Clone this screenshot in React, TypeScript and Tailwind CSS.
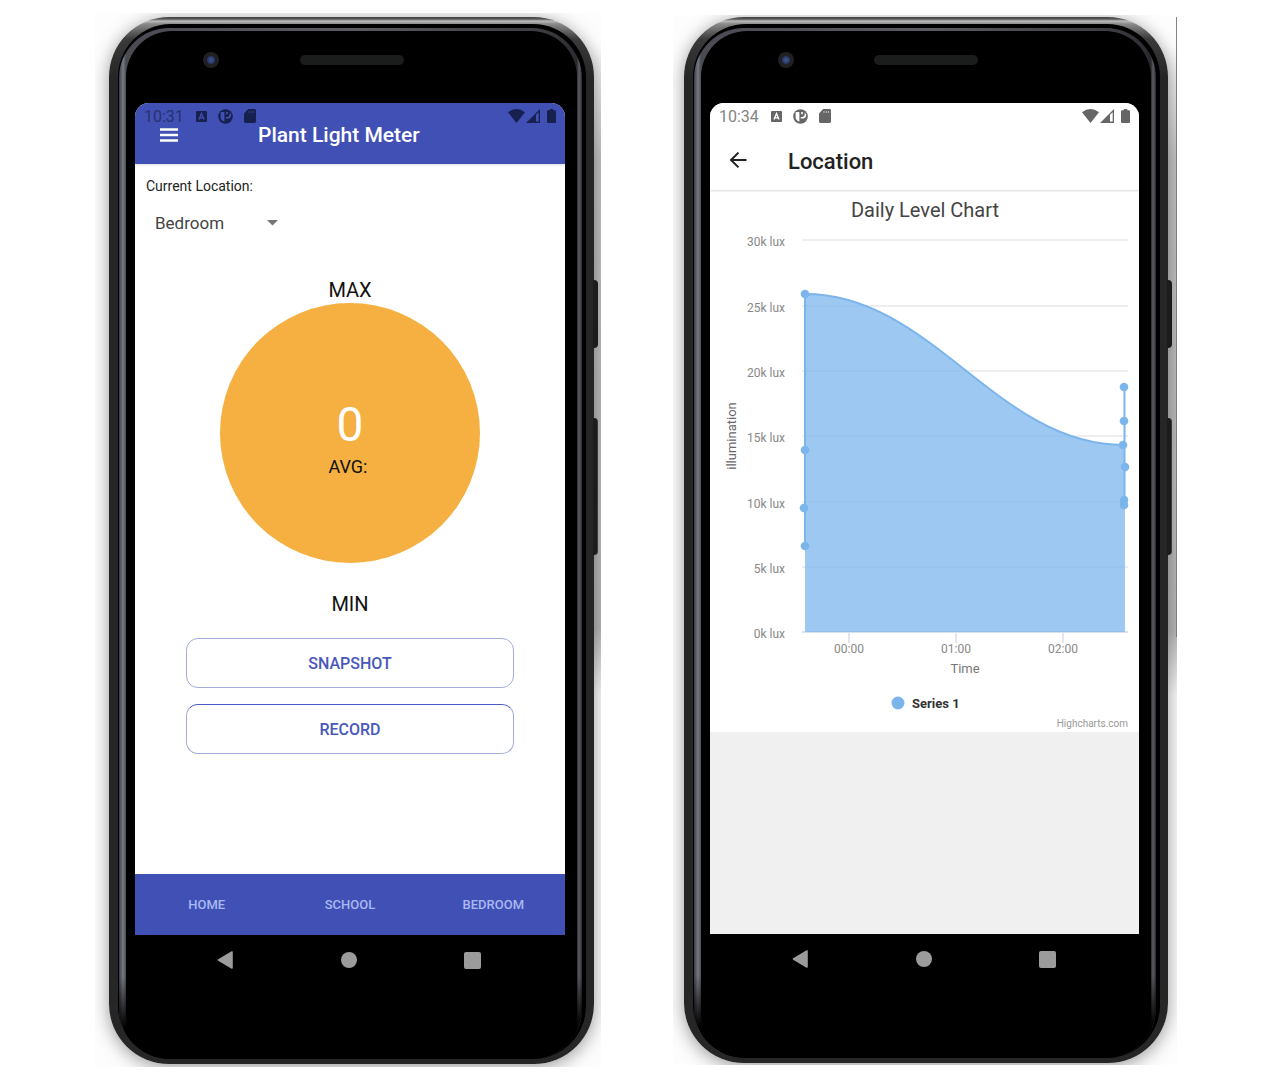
import React from "react";

function StatusBar({ time, tone, textTone, badge }: { time: string; tone: string; textTone: string; badge: string }) {
  return (
    <div className="flex h-[26px] items-center justify-between pl-[9px] pr-[9px]">
      <div className={`flex items-center ${tone}`}>
        <span className={`w-[52px] pt-0.5 text-base leading-none ${textTone}`}>{time}</span>
        <svg width="11" height="11" viewBox="0 0 11 11" aria-hidden="true">
          <rect width="11" height="11" rx="1" fill="currentColor" />
          <path d="M3 8.6 5.5 2.4 8 8.6M3.8 6.9H7.2" fill="none" stroke={badge} strokeWidth="1.3" />
        </svg>
        <svg className="ml-[11px]" width="15" height="15" viewBox="0 0 15 15" aria-hidden="true">
          <circle cx="7.5" cy="7.5" r="7.3" fill="currentColor" />
          <path d="M3.4 2.9H6.4V12.6Q4 12.2 2.6 9.6V3.7ZM8.2 3.1H9.8V5.2H8.2ZM7.8 8H9.6Q11.400 7.800 11.700 5.400V3.400L13.200 5.400Q13.600 9 9.600 9.600H7.800Z" fill={badge} />
        </svg>
        <svg className="ml-[11px]" width="12" height="14" viewBox="0 0 12 14" aria-hidden="true">
          <path d="M4.2 0H10.6Q12 0 12 1.4V12.6Q12 14 10.6 14H1.4Q0 14 0 12.6V4.4Z" fill="currentColor" />
          <path d="M5 2V4M7.3 2V4M9.6 2V4" stroke={badge} strokeWidth="1" opacity=".6" />
        </svg>
      </div>
      <div className={`flex items-center ${tone}`}>
        <svg width="17" height="14" viewBox="0 0 17 14" aria-hidden="true">
          <path d="M0 3.2Q8.5-3.2 17 3.2L8.5 14Z" fill="currentColor" />
        </svg>
        <svg className="ml-px" width="14" height="14" viewBox="0 0 14 14" aria-hidden="true">
          <path d="M0 14 14 0V14ZM10 5.8V12.6H12.7V3.2Z" fill="currentColor" fillRule="evenodd" />
        </svg>
        <svg className="ml-[7px]" width="9" height="14" viewBox="0 0 9 14" aria-hidden="true">
          <path d="M2.8 0H6.2V1.3H8Q9 1.3 9 2.3V13Q9 14 8 14H1Q0 14 0 13V2.3Q0 1.3 1 1.3H2.8Z" fill="currentColor" />
        </svg>
      </div>
    </div>
  );
}

function SystemNav() {
  return (
    <nav aria-label="System" className="flex h-[50px] items-center justify-center gap-[107px] pr-0.5 text-[#9b9b9b]">
      <button type="button" aria-label="Back">
        <svg width="17" height="18" viewBox="0 0 17 18" aria-hidden="true">
          <path d="M15 1V17L1.5 9Z" fill="currentColor" stroke="currentColor" strokeWidth="1.6" strokeLinejoin="round" />
        </svg>
      </button>
      <button type="button" aria-label="Home" className="size-4 rounded-full bg-[#9b9b9b]" />
      <button type="button" aria-label="Recent apps" className="size-[17px] rounded-xs bg-[#9b9b9b]" />
    </nav>
  );
}

function Phone({ frame, edge, children }: { frame: string; edge?: boolean; children: React.ReactNode }) {
  return (
    <section className={`relative min-w-0 flex-1 overflow-hidden bg-[#fdfdfd] ${frame}`}>
      <div className="absolute right-0 top-[30px] h-[650px] w-5 bg-[linear-gradient(to_bottom,transparent,#c4c4c4_18%,#b8b8b8_90%,transparent)]" />
      {edge && <div className="absolute right-0 top-0.5 h-[620px] w-px bg-[#858585]" />}
      <div className="relative rounded-[60px] bg-[linear-gradient(to_bottom,#444_0px,#555_2px,#bcbcbc_4px,#8a8a8a_7px,#3a3a3a_22px,#262626_60px,#262626_100%)] pb-[5px] pl-[9px] pr-2 pt-[7px] shadow-[0_3px_18px_rgba(0,0,0,0.4)]">
        <div className="absolute -right-1 top-[263px] h-[68px] w-[5px] rounded-r-sm bg-[#1c1c1c]" />
        <div className="absolute -right-1 top-[401px] h-[137px] w-[5px] rounded-r-sm border-r border-[#3a3a3a] bg-[#1c1c1c]" />
        <div className="rounded-[53px] bg-black pl-px pr-1 pt-1">
          <div className="rounded-[50px] bg-[linear-gradient(to_right,#3c3d42_0px,#777a84_4px,#4a4b52_7px,#5c5d64_50%,#3c3d42_calc(100%-40px),#2a2a2e_calc(100%-5px),#5c5d63_calc(100%-3px),#2a2a2e_100%)]">
            <div className="rounded-[50px] bg-[linear-gradient(to_bottom,transparent_92%,#000_97%)] pl-[7px] pr-[5px] pt-[3px]">
              <div className="rounded-[46px] bg-black pb-[74px] pl-[9px] pr-3">
                <div className="grid h-[72px] grid-cols-[1fr_auto_1fr] items-center pb-[14px]">
                  <div className="ml-[68px] flex size-4 items-center justify-center rounded-full bg-[#202024]">
                    <div className="size-2 rounded-full bg-[radial-gradient(#3f5a94,#1a2548)]" />
                  </div>
                  <div className="ml-[3px] h-[10px] w-[104px] rounded-full bg-[#1b1d1d]" />
                </div>
                <div className="overflow-hidden rounded-t-[14px] bg-white">{children}</div>
                <SystemNav />
              </div>
            </div>
          </div>
        </div>
      </div>
    </section>
  );
}

function MeterScreen() {
  return (
    <>
      <header className="h-[61px] bg-[#4150b5] shadow-sm">
        <StatusBar time="10:31" tone="text-[#17214f]" textTone="text-[#28326e]" badge="#4150b5" />
        <div className="-mt-2 flex h-7 items-center text-white">
          <button type="button" aria-label="Open menu" className="ml-[25px] w-[18px]">
            <svg width="18" height="14" viewBox="0 0 18 14" aria-hidden="true">
              <path d="M0 1.5H18M0 7H18M0 12.5H18" stroke="currentColor" strokeWidth="2.4" />
            </svg>
          </button>
          <h1 className="ml-20 text-[21px] font-medium leading-7">Plant Light Meter</h1>
        </div>
      </header>
      <div className="flex flex-col pb-[120px]">
        <label htmlFor="location" className="ml-[11px] mt-3 text-sm leading-5 text-[#222]">
          Current Location:
        </label>
        <div className="relative ml-5 mt-[13px] w-[123px] text-[#444]">
          <select id="location" defaultValue="Bedroom" className="w-full appearance-none bg-transparent text-[17px] leading-7 outline-none">
            <option>Bedroom</option>
            <option>Home</option>
            <option>School</option>
          </select>
          <svg className="pointer-events-none absolute right-0 top-[11px]" width="11" height="6" viewBox="0 0 11 6" aria-hidden="true">
            <path d="M0 0H11L5.5 5.5Z" fill="#757575" />
          </svg>
        </div>
        <div className="mt-[41px] text-center text-xl leading-6 text-[#111]">MAX</div>
        <div className="mx-auto mt-px flex size-[260px] flex-col items-center rounded-full bg-[#f5b041] pt-24">
          <span className="text-5xl leading-[52px] text-white">0</span>
          <span className="mt-1 self-center pr-1 text-lg leading-6 text-[#111]">AVG:</span>
        </div>
        <div className="mt-[29px] text-center text-xl leading-6 text-[#111]">MIN</div>
        <div className="mx-[51px] mt-[22px] flex flex-col gap-4 text-base font-medium text-[#4a58bb]">
          <button type="button" className="h-[50px] rounded-xl border border-[#a3abdf] pt-0.5">SNAPSHOT</button>
          <button type="button" className="h-[50px] rounded-xl border border-[#a3abdf] border-t-[#4a5cc4] pt-0.5">RECORD</button>
        </div>
      </div>
      <nav aria-label="Locations" className="grid h-[61px] grid-cols-3 bg-[#4150b5] text-[13px] font-medium text-[#a9b9f2]">
        <button type="button">HOME</button>
        <button type="button">SCHOOL</button>
        <button type="button">BEDROOM</button>
      </nav>
    </>
  );
}

const levels = [
  { label: "30k lux", y: 49 },
  { label: "25k lux", y: 115 },
  { label: "20k lux", y: 180 },
  { label: "15k lux", y: 245 },
  { label: "10k lux", y: 311 },
  { label: "5k lux", y: 376 },
  { label: "0k lux", y: 441 },
];
const hours = [
  { label: "00:00", x: 139 },
  { label: "01:00", x: 246 },
  { label: "02:00", x: 353 },
];
const readings = [
  [95, 103], [95, 259], [94, 317], [95, 355],
  [414, 196], [414, 230], [413, 254], [415, 276], [414, 309], [414, 314],
];

function LevelChart() {
  return (
    <svg className="block w-full" viewBox="0 0 429 541" role="img" aria-label="Daily Level Chart">
      <text x="215" y="26" textAnchor="middle" fontSize="20" fill="#444">Daily Level Chart</text>
      {levels.map((l) => (
        <g key={l.label}>
          <path d={`M92 ${l.y}H418`} stroke={l.y === 441 ? "#ccd6eb" : "#e9e9e9"} strokeWidth="1.5" />
          <text x="75" y={l.y + 6} textAnchor="end" fontSize="12" fill="#888">{l.label}</text>
        </g>
      ))}
      <path d="M95 103C222.6 103 286.4 254 414 254H415V441H95Z" fill="#7cb5ec" fillOpacity="0.75" />
      <path d="M95 355V103C222.6 103 286.4 254 414 254M414.500 196V314" fill="none" stroke="#7cb5ec" strokeWidth="2" />
      {readings.map(([x, y]) => (
        <circle key={`${x}-${y}`} cx={x} cy={y} r="4.3" fill="#7cb5ec" />
      ))}
      {hours.map((h) => (
        <g key={h.label}>
          <path d={`M${h.x} 442V452`} stroke="#ccd6eb" strokeWidth="1.2" />
          <text x={h.x} y="462" textAnchor="middle" fontSize="12" fill="#888">{h.label}</text>
        </g>
      ))}
      <text x="255" y="482" textAnchor="middle" fontSize="13" fill="#777">Time</text>
      <text x="26" y="245" textAnchor="middle" fontSize="13" fill="#666" transform="rotate(-90 26 245)">illumination</text>
      <circle cx="188" cy="512" r="6.5" fill="#7cb5ec" />
      <text x="202" y="517" fontSize="13" fontWeight="700" fill="#333">Series 1</text>
      <text x="418" y="536" textAnchor="end" fontSize="10" fill="#999">Highcharts.com</text>
    </svg>
  );
}

function LocationScreen() {
  return (
    <>
      <header className="relative h-[87px] bg-white shadow-[0_1px_2px_rgba(0,0,0,0.15)]">
        <StatusBar time="10:34" tone="text-[#666]" textTone="text-[#858585]" badge="#ffffff" />
        <div className="mt-[18px] flex h-7 items-center text-[#222]">
          <button type="button" aria-label="Go back" className="ml-[19px] w-[18px]">
            <svg width="18" height="18" viewBox="0 0 18 18" aria-hidden="true">
              <path d="M17.500 8H2M9.500 0.600 2 8 9.500 15.400" fill="none" stroke="currentColor" strokeWidth="2" />
            </svg>
          </button>
          <h1 className="ml-[41px] pt-0.5 text-[22px] font-medium leading-7">Location</h1>
        </div>
      </header>
      <div className="pt-px">
        <LevelChart />
      </div>
      <div className="h-[202px] bg-[#f0f0f0]" />
    </>
  );
}

export default function App() {
  return (
    <main className="flex items-start justify-center gap-[72px] bg-white pr-2 pt-[13px] font-['Roboto',sans-serif]">
      <Phone frame="max-w-[506px] pl-[14px] pr-[7px] pt-1 pb-[3px]">
        <MeterScreen />
      </Phone>
      <Phone frame="mt-0.5 max-w-[504px] pl-[11px] pr-[9px] pt-0.5 pb-0.5" edge>
        <LocationScreen />
      </Phone>
    </main>
  );
}
